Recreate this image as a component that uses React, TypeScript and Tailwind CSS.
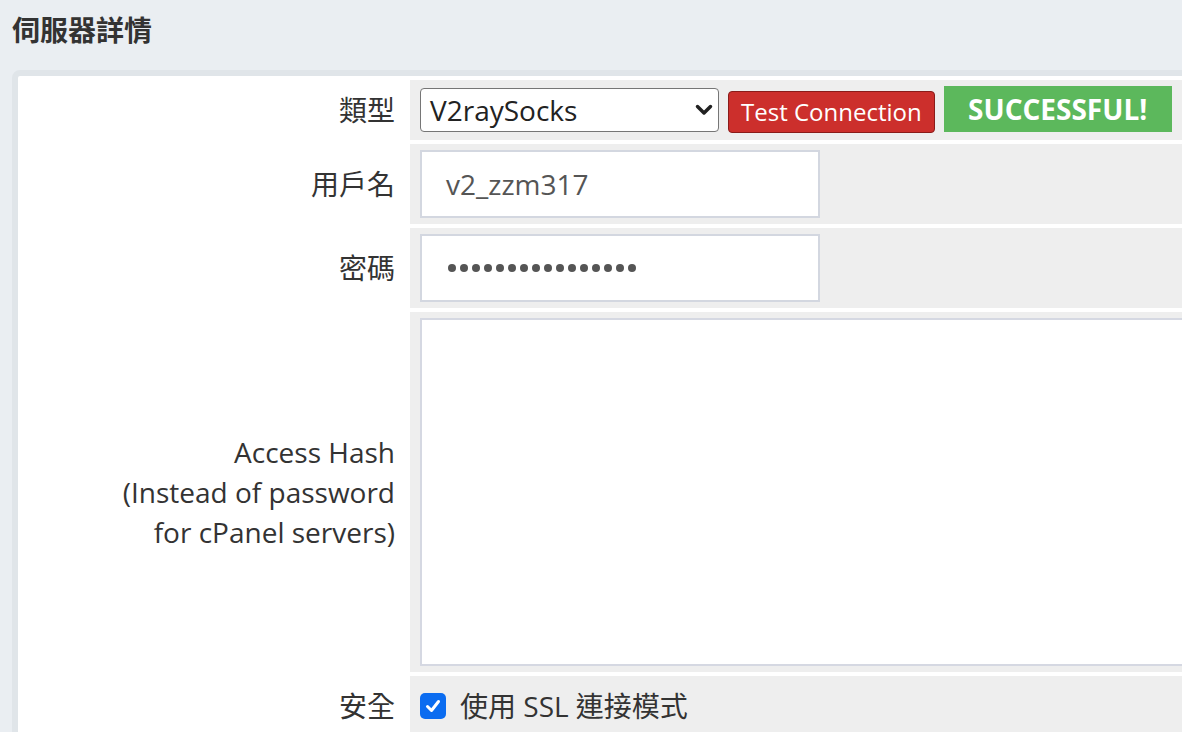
import React from "react";

const font = {
  fontFamily: '"Open Sans", "Noto Sans CJK TC", sans-serif',
};

function Chevron() {
  return (
    <svg width="18" height="12" viewBox="0 0 18 12" className="pointer-events-none absolute right-[6px] top-1/2 -translate-y-1/2">
      <path d="M2.5 2.5 L9 9 L15.5 2.5" fill="none" stroke="#222" strokeWidth="3.5" strokeLinecap="round" strokeLinejoin="round" />
    </svg>
  );
}

function Row({ label, height, children }: { label: React.ReactNode; height: string; children: React.ReactNode }) {
  return (
    <div className={`flex ${height}`}>
      <div className="w-[392px] shrink-0 flex items-center justify-end pr-[15px] text-right text-[28px] leading-[40px] text-[#333]">
        {label}
      </div>
      <div className="flex-1 bg-[#eeeeee] pl-[10px] flex items-center">{children}</div>
    </div>
  );
}

export default function App() {
  return (
    <div className="w-[1182px] h-[732px] overflow-hidden bg-[#eaeef2]" style={font}>
      <h1 className="pl-[12px] pt-[10px] text-[28px] leading-[40px] font-bold text-[#333]">伺服器詳情</h1>

      <div className="mt-[20px] ml-[12px] w-[1300px] rounded-[8px] border-[6px] border-[#e0e5e9] bg-white pt-[4px] pb-[10px]">
        <div className="flex flex-col gap-[4px]">
          <Row label="類型" height="h-[60px]">
            <div className="relative">
              <div className="w-[299px] h-[44px] rounded-[4px] border border-[#767676] bg-white pl-[9px] text-[28px] leading-[42px] text-[#222]">
                V2raySocks
              </div>
              <Chevron />
            </div>
            <button className="ml-[9px] mt-[4px] h-[42px] rounded-[4px] border border-[#8a1c1a] bg-[#cc2f2c] px-[12px] text-[24px] leading-[38px] text-white">
              Test Connection
            </button>
            <div className="ml-[9px] -mt-[2px] h-[46px] w-[228px] bg-[#5cb85c] text-center text-[28px] font-bold leading-[46px] text-white">
              SUCCESSFUL!
            </div>
          </Row>

          <Row label="用戶名" height="h-[80px]">
            <div className="w-[400px] h-[68px] border-2 border-[#d3d7e0] bg-white pl-[24px] text-[28px] leading-[64px] text-[#555]">
              v2_zzm317
            </div>
          </Row>

          <Row label="密碼" height="h-[80px]">
            <div className="w-[400px] h-[68px] border-2 border-[#d3d7e0] bg-white pl-[26px] flex items-center gap-[4px]">
              {Array.from({ length: 16 }).map((_, i) => (
                <span key={i} className="block w-[8px] h-[8px] rounded-full bg-[#555]" />
              ))}
            </div>
          </Row>

          <Row
            label={
              <div>
                Access Hash
                <br />
                (Instead of password
                <br />
                for cPanel servers)
              </div>
            }
            height="h-[360px]"
          >
            <div className="w-full h-[348px] border-2 border-[#d5d8e2] bg-white" />
          </Row>

          <Row label="安全" height="h-[60px]">
            <div className="flex items-center">
              <span className="flex w-[26px] h-[26px] items-center justify-center rounded-[5px] bg-[#0b6cf0]">
                <svg width="18" height="18" viewBox="0 0 18 18">
                  <path d="M3.5 9.5 L7.5 13.5 L14.5 4.5" fill="none" stroke="white" strokeWidth="3" strokeLinecap="round" strokeLinejoin="round" />
                </svg>
              </span>
              <span className="ml-[14px] text-[28px] leading-[40px] text-[#333]">使用 SSL 連接模式</span>
            </div>
          </Row>
        </div>
      </div>
    </div>
  );
}
